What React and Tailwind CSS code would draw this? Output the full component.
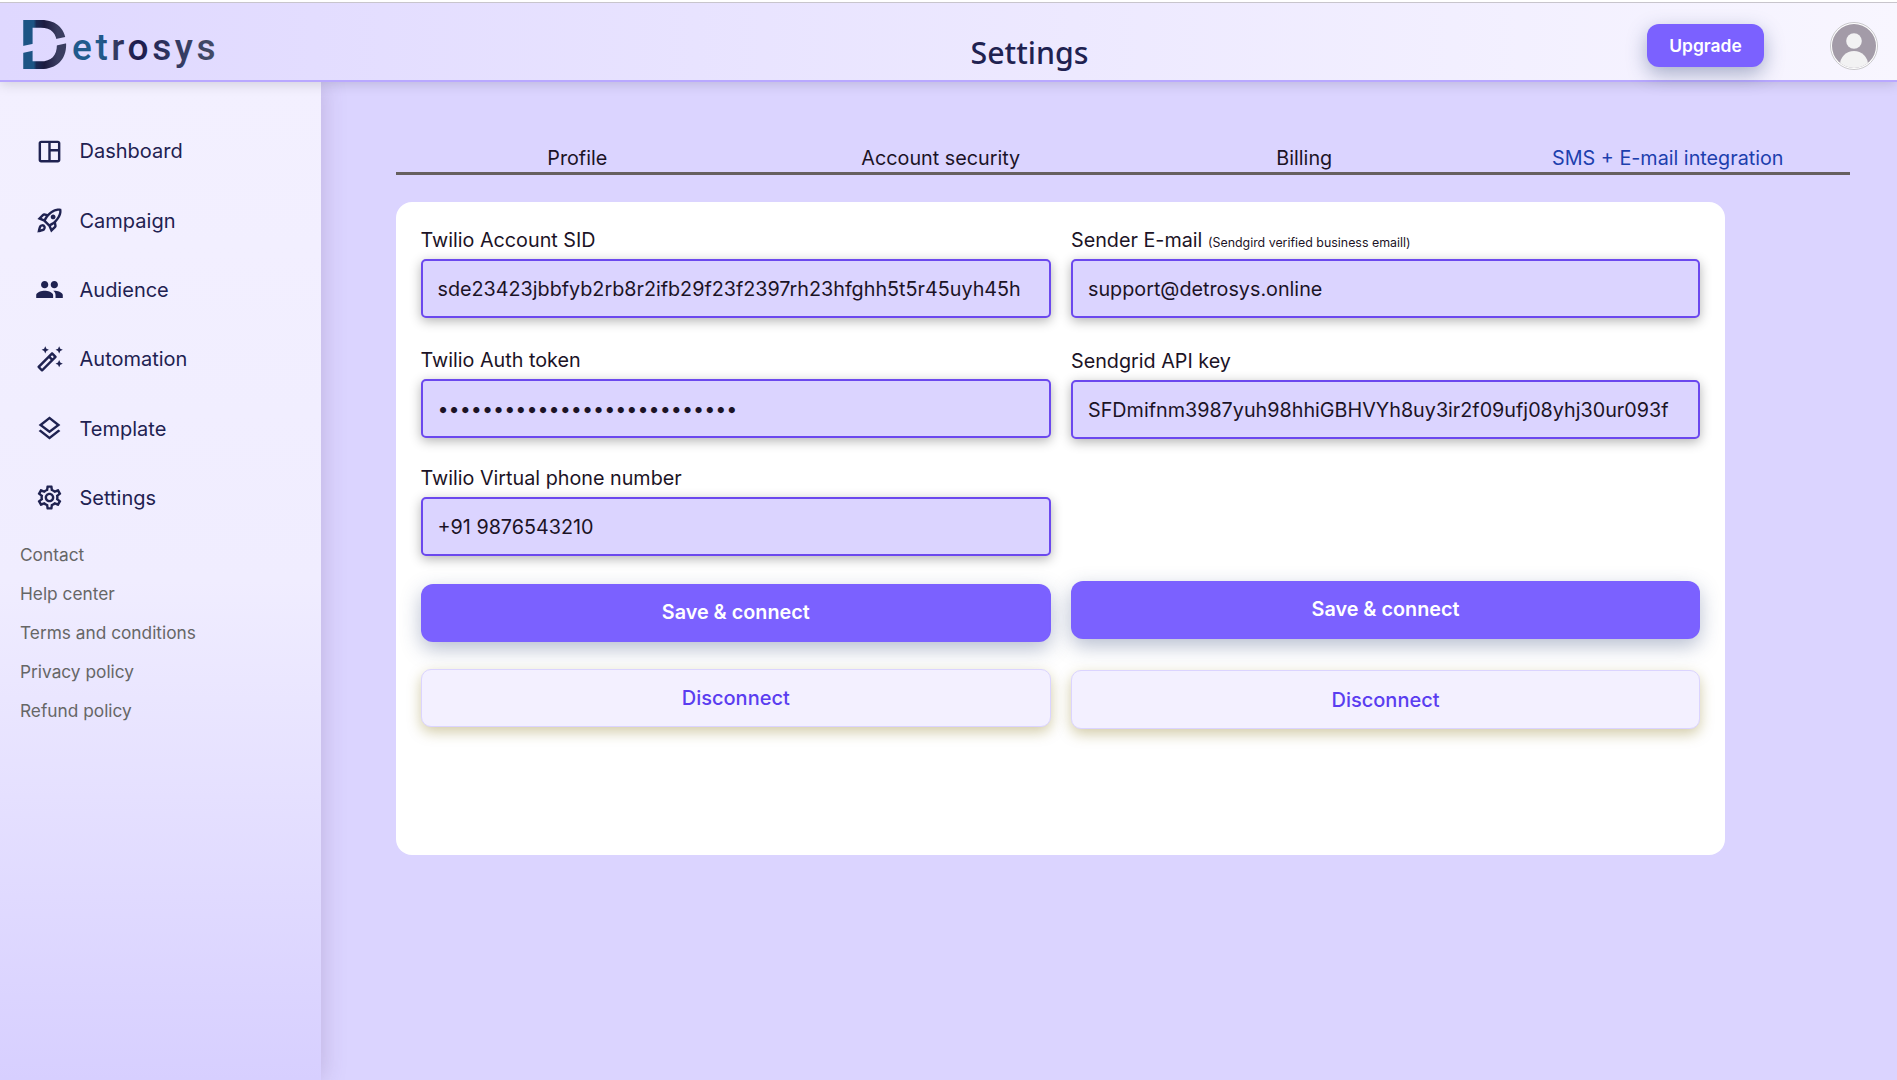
import React, { useState } from "react";
import {
  MdOutlineSpaceDashboard,
  MdOutlineRocketLaunch,
  MdPeople,
  MdOutlineAutoFixHigh,
  MdOutlineLayers,
  MdOutlineSettings,
} from "react-icons/md";

const menu = [
  { name: "Dashboard", icon: MdOutlineSpaceDashboard },
  { name: "Campaign", icon: MdOutlineRocketLaunch },
  { name: "Audience", icon: MdPeople },
  { name: "Automation", icon: MdOutlineAutoFixHigh },
  { name: "Template", icon: MdOutlineLayers },
  { name: "Settings", icon: MdOutlineSettings },
];

const links = ["Contact", "Help center", "Terms and conditions", "Privacy policy", "Refund policy"];

const tabs = ["Profile", "Account security", "Billing", "SMS + E-mail integration"];

const Logo = () => (
  <svg width="240" height="92" viewBox="0 0 240 92" className="-mb-3 block">
    <defs>
      <linearGradient id="markFill" gradientUnits="userSpaceOnUse" x1="4" y1="0" x2="46" y2="0">
        <stop offset="0.26" stopColor="#1d5484" />
        <stop offset="0.32" stopColor="#1b2a55" />
        <stop offset="0.5" stopColor="#1d1b40" />
        <stop offset="0.8" stopColor="#3a3d60" />
      </linearGradient>
      <linearGradient id="wordFill" gradientUnits="userSpaceOnUse" x1="73" y1="0" x2="215" y2="0">
        <stop offset="0.2" stopColor="#205a8c" />
        <stop offset="0.3" stopColor="#35395f" />
        <stop offset="0.46" stopColor="#1c1b4b" />
        <stop offset="0.68" stopColor="#2f3560" />
        <stop offset="0.95" stopColor="#414a66" />
      </linearGradient>
      {/* slanted cut through the D */}
      <mask id="cut" maskUnits="userSpaceOnUse" x="0" y="0" width="240" height="92">
        <rect width="240" height="92" fill="white" />
        <polygon points="18,47 70,36 70,42.5 18,54" fill="black" />
      </mask>
    </defs>
    <g mask="url(#cut)">
      <text
        transform="translate(18 69) scale(1.055 1)"
        fontFamily="Inter, sans-serif"
        fontWeight="600"
        fontSize="68"
        fill="url(#markFill)"
      >
        D
      </text>
    </g>
    <text
      x="72"
      y="60"
      fontFamily="Roboto, sans-serif"
      fontWeight="500"
      fontSize="37"
      letterSpacing="3.6"
      fill="url(#wordFill)"
    >
      etrosys
    </text>
  </svg>
);

const Avatar = () => (
  <svg width="48" height="48" viewBox="0 0 48 48">
    <defs>
      <clipPath id="face">
        <circle cx="24" cy="24" r="22" />
      </clipPath>
    </defs>
    <circle cx="24" cy="24" r="23.5" fill="#fff" stroke="#c9c8cc" />
    <g clipPath="url(#face)">
      <rect width="48" height="48" fill="#a39ba8" />
      <circle cx="24" cy="19" r="7.8" fill="#f2f2f3" />
      <ellipse cx="24" cy="43" rx="14" ry="14" fill="#f2f2f3" />
    </g>
  </svg>
);

const Field = ({ label, hint, value, onChange, type = "text" }) => (
  <label className="block">
    <span className="block h-[30px] text-[19.75px] leading-[23px]">
      {label} {hint && <span className="text-[12.4px]">{hint}</span>}
    </span>
    <input
      type={type}
      value={value}
      onChange={onChange}
      className="block h-[59px] w-full rounded-[5px] border-2 border-[#6b48ee] bg-[#dbd4ff] px-[15px] text-[19.75px] shadow-[0_3px_12px_rgba(0,0,0,0.3)] outline-none"
    />
  </label>
);

const SaveButton = () => (
  <button className="block h-[57.5px] w-full rounded-xl bg-[#7b61ff] text-[19.8px] font-semibold text-white shadow-[0_7px_20px_rgba(50,70,120,0.35)]">
    Save &amp; connect
  </button>
);

const DisconnectButton = () => (
  <button className="block h-[58.5px] w-full rounded-[10px] border border-[#dbd4ff] bg-[#f3f0ff] text-[20px] font-medium text-[#5a3df0] shadow-[0_5px_14px_rgba(130,110,10,0.36)]">
    Disconnect
  </button>
);

const App = () => {
  const [active, setActive] = useState("SMS + E-mail integration");
  const [form, setForm] = useState({
    sid: "sde23423jbbfyb2rb8r2ifb29f23f2397rh23hfghh5t5r45uyh45h",
    token: "abcdefghijklmnopqrstuvwxyz0",
    phone: "+91 9876543210",
    email: "support@detrosys.online",
    apiKey: "SFDmifnm3987yuh98hhiGBHVYh8uy3ir2f09ufj08yhj30ur093f",
  });

  const update = (key) => (e) => setForm({ ...form, [key]: e.target.value });

  return (
    <div className="flex h-screen flex-col overflow-hidden bg-[#dbd4ff] font-['Inter',sans-serif] text-[#1c1326]">
      {/* Header */}
      <header className="relative z-20 flex h-[82px] shrink-0 items-center border-b-2 border-[#b9a8ff] bg-linear-to-r from-[#dfd8ff] to-[#f8f6ff] shadow-[0_2px_12px_rgba(0,0,0,0.15)]">
        <div className="absolute inset-x-0 top-0 h-[3px] border-b border-[#c8c5cc] bg-white" />
        <div className="w-[800px]">
          <Logo />
        </div>
        <h1 className="w-[459px] pt-[25px] text-center font-['Noto_Sans',sans-serif] text-[30.3px] leading-[36px] font-medium text-[#1f2251]">
          Settings
        </h1>
        <div className="flex flex-1 items-center justify-end gap-[66px] pt-[11px] pr-[19px]">
          <button className="h-[43.5px] w-[117px] rounded-xl bg-[#7b61ff] pt-px text-[17.4px] font-semibold text-white shadow-[0_7px_20px_rgba(50,70,120,0.4)]">
            Upgrade
          </button>
          <Avatar />
        </div>
      </header>

      <div className="flex min-h-0 flex-1">
        {/* Sidebar */}
        <aside className="z-10 w-[321px] shrink-0 bg-linear-to-b from-[#f3f0ff] via-[#f0edff] via-50% to-[#d7cfff] pt-[34.5px] shadow-[2px_0_22px_rgba(100,70,120,0.22)]">
          <nav>
            {menu.map(({ name, icon: Icon }) => (
              <a key={name} href="#" className="flex h-[69.35px] items-center gap-[15.5px] pl-[35px] text-[20px] text-[#1f2251]">
                <Icon size={29} />
                {name}
              </a>
            ))}
          </nav>
          <ul className="mt-[2.5px] pl-5 text-[17.3px] text-[#666]">
            {links.map((link) => (
              <li key={link} className="flex h-[39px] items-center">{link}</li>
            ))}
          </ul>
        </aside>

        <main className="flex-1 pt-[63px] pl-[74.5px]">
          {/* Tabs */}
          <div className="grid w-[1454px] grid-cols-4 border-b-[3px] border-[#66605f] text-[19.75px] leading-[27px]">
            {tabs.map((tab) => (
              <button
                key={tab}
                onClick={() => setActive(tab)}
                className={active === tab ? "text-[#1d3fae]" : "text-[#1c1326]"}
              >
                {tab}
              </button>
            ))}
          </div>

          {/* Integration forms */}
          <section className="mt-[27px] grid h-[652.5px] w-[1329.5px] grid-cols-[630.5px_629px] gap-5 rounded-2xl bg-white pt-[27px] pl-[25px]">
            <div>
              <Field label="Twilio Account SID" value={form.sid} onChange={update("sid")} />
              <div className="mt-[31px]">
                <Field label="Twilio Auth token" type="password" value={form.token} onChange={update("token")} />
              </div>
              <div className="mt-[29.4px]">
                <Field label="Twilio Virtual phone number" value={form.phone} onChange={update("phone")} />
              </div>
              <div className="mt-[28px]">
                <SaveButton />
              </div>
              <div className="mt-[27px]">
                <DisconnectButton />
              </div>
            </div>
            <div>
              <Field
                label="Sender E-mail"
                hint="(Sendgird verified business emaill)"
                value={form.email}
                onChange={update("email")}
              />
              <div className="mt-[32px]">
                <Field label="Sendgrid API key" value={form.apiKey} onChange={update("apiKey")} />
              </div>
              <div className="mt-[142.4px]">
                <SaveButton />
              </div>
              <div className="mt-[31.5px]">
                <DisconnectButton />
              </div>
            </div>
          </section>
        </main>
      </div>
    </div>
  );
};

export default App;
